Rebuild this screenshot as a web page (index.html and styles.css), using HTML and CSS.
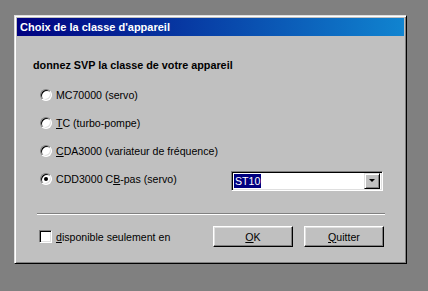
FILE: index.html
```html
<!DOCTYPE html>
<html lang="fr">
<head>
  <meta charset="UTF-8">
  <title>Choix de la classe d'appareil</title>
  <link rel="stylesheet" href="styles.css">
</head>
<body>

<div class="window">
  <div class="titlebar">Choix de la classe d'appareil</div>

  <div class="dialog">
    <div class="prompt">donnez SVP la classe de votre appareil</div>

    <!-- device classes -->
    <div class="options">
      <div class="option">
        <span class="radio"></span>
        <span>MC70000 (servo)</span>
      </div>
      <div class="option">
        <span class="radio"></span>
        <span><u>T</u>C (turbo-pompe)</span>
      </div>
      <div class="option">
        <span class="radio"></span>
        <span><u>C</u>DA3000 (variateur de fréquence)</span>
      </div>
      <div class="option">
        <span class="radio checked"></span>
        <span>CDD3000 C<u>B</u>-pas (servo)</span>
        <div class="combo">
          <span class="combo-value">ST10</span>
          <span class="combo-arrow"></span>
        </div>
      </div>
    </div>

    <div class="separator"></div>

    <div class="footer">
      <div class="check">
        <span class="checkbox"></span>
        <span><u>d</u>isponible seulement en</span>
      </div>
      <div class="buttons">
        <button class="btn"><u>O</u>K</button>
        <button class="btn"><u>Q</u>uitter</button>
      </div>
    </div>
  </div>
</div>

</body>
</html>
```

FILE: styles.css
```css
body {
  margin: 0;
  padding: 15px 0 0 14px;
  background: #808080;
  font-family: 'Liberation Sans', Arial, sans-serif;
  font-size: 10.6px;
  color: #000;
}

.window {
  box-sizing: border-box;
  width: 393px;
  height: 249px;
  padding: 2px;
  background: #c0c0c0;
  border: 1px solid;
  border-color: #dfdfdf #000 #000 #dfdfdf;
  box-shadow: inset 1px 1px #fff, inset -1px -1px #808080;
}

.titlebar {
  height: 18px;
  line-height: 18px;
  padding-left: 3px;
  background: linear-gradient(to right, #000080, #1084d0);
  color: #fff;
  font-weight: bold;
  font-size: 11px;
}

.dialog {
  padding: 0 16px;
}

.prompt {
  margin-top: 22px;
  line-height: 14px;
  font-weight: bold;
  font-size: 10.8px;
}

.options {
  margin-top: 9px;
}

.option {
  display: flex;
  align-items: center;
  height: 28px;
  padding-left: 7px;
}

.radio {
  box-sizing: border-box;
  position: relative;
  width: 12px;
  height: 12px;
  margin-right: 4px;
  border-radius: 50%;
  background: #fff;
  border: 1px solid;
  border-color: #808080 #fff #fff #808080;
  box-shadow: inset 1px 1px #000, inset -1px -1px #dfdfdf;
}

.radio.checked::after {
  content: "";
  position: absolute;
  left: 3px;
  top: 3px;
  width: 4px;
  height: 4px;
  border-radius: 50%;
  background: #000;
}

.combo {
  box-sizing: border-box;
  display: flex;
  align-items: center;
  justify-content: space-between;
  width: 152px;
  height: 20px;
  margin: 4px 5px 0 auto;
  padding: 2px;
  background: #fff;
  border: 1px solid;
  border-color: #808080 #fff #fff #808080;
  box-shadow: inset 1px 1px #000, inset -1px -1px #dfdfdf;
}

.combo-value {
  background: #000080;
  color: #fff;
  padding: 0 1px;
  line-height: 14px;
}

.combo-arrow {
  box-sizing: border-box;
  position: relative;
  width: 16px;
  height: 16px;
  background: #c0c0c0;
  border: 1px solid;
  border-color: #dfdfdf #000 #000 #dfdfdf;
  box-shadow: inset 1px 1px #fff, inset -1px -1px #808080;
}

.combo-arrow::after {
  content: "";
  position: absolute;
  left: 4px;
  top: 5px;
  border-left: 3px solid transparent;
  border-right: 3px solid transparent;
  border-top: 3px solid #000;
}

.separator {
  margin: 20px 3px 0 4px;
  border-top: 1px solid #808080;
  border-bottom: 1px solid #fff;
}

.footer {
  display: flex;
  align-items: center;
  justify-content: space-between;
  margin-top: 11px;
  padding-left: 6px;
}

.check {
  display: flex;
  align-items: center;
}

.checkbox {
  box-sizing: border-box;
  width: 13px;
  height: 13px;
  margin-right: 4px;
  background: #fff;
  border: 1px solid;
  border-color: #808080 #fff #fff #808080;
  box-shadow: inset 1px 1px #000, inset -1px -1px #dfdfdf;
}

.buttons {
  display: flex;
  gap: 11px;
  margin-right: 4px;
}

.btn {
  box-sizing: border-box;
  width: 80px;
  height: 21px;
  padding: 0;
  background: #c0c0c0;
  font-family: inherit;
  font-size: 10.6px;
  color: #000;
  border: 1px solid;
  border-color: #fff #000 #000 #fff;
  box-shadow: inset -1px -1px #808080, inset 1px 1px #dfdfdf;
}
```
